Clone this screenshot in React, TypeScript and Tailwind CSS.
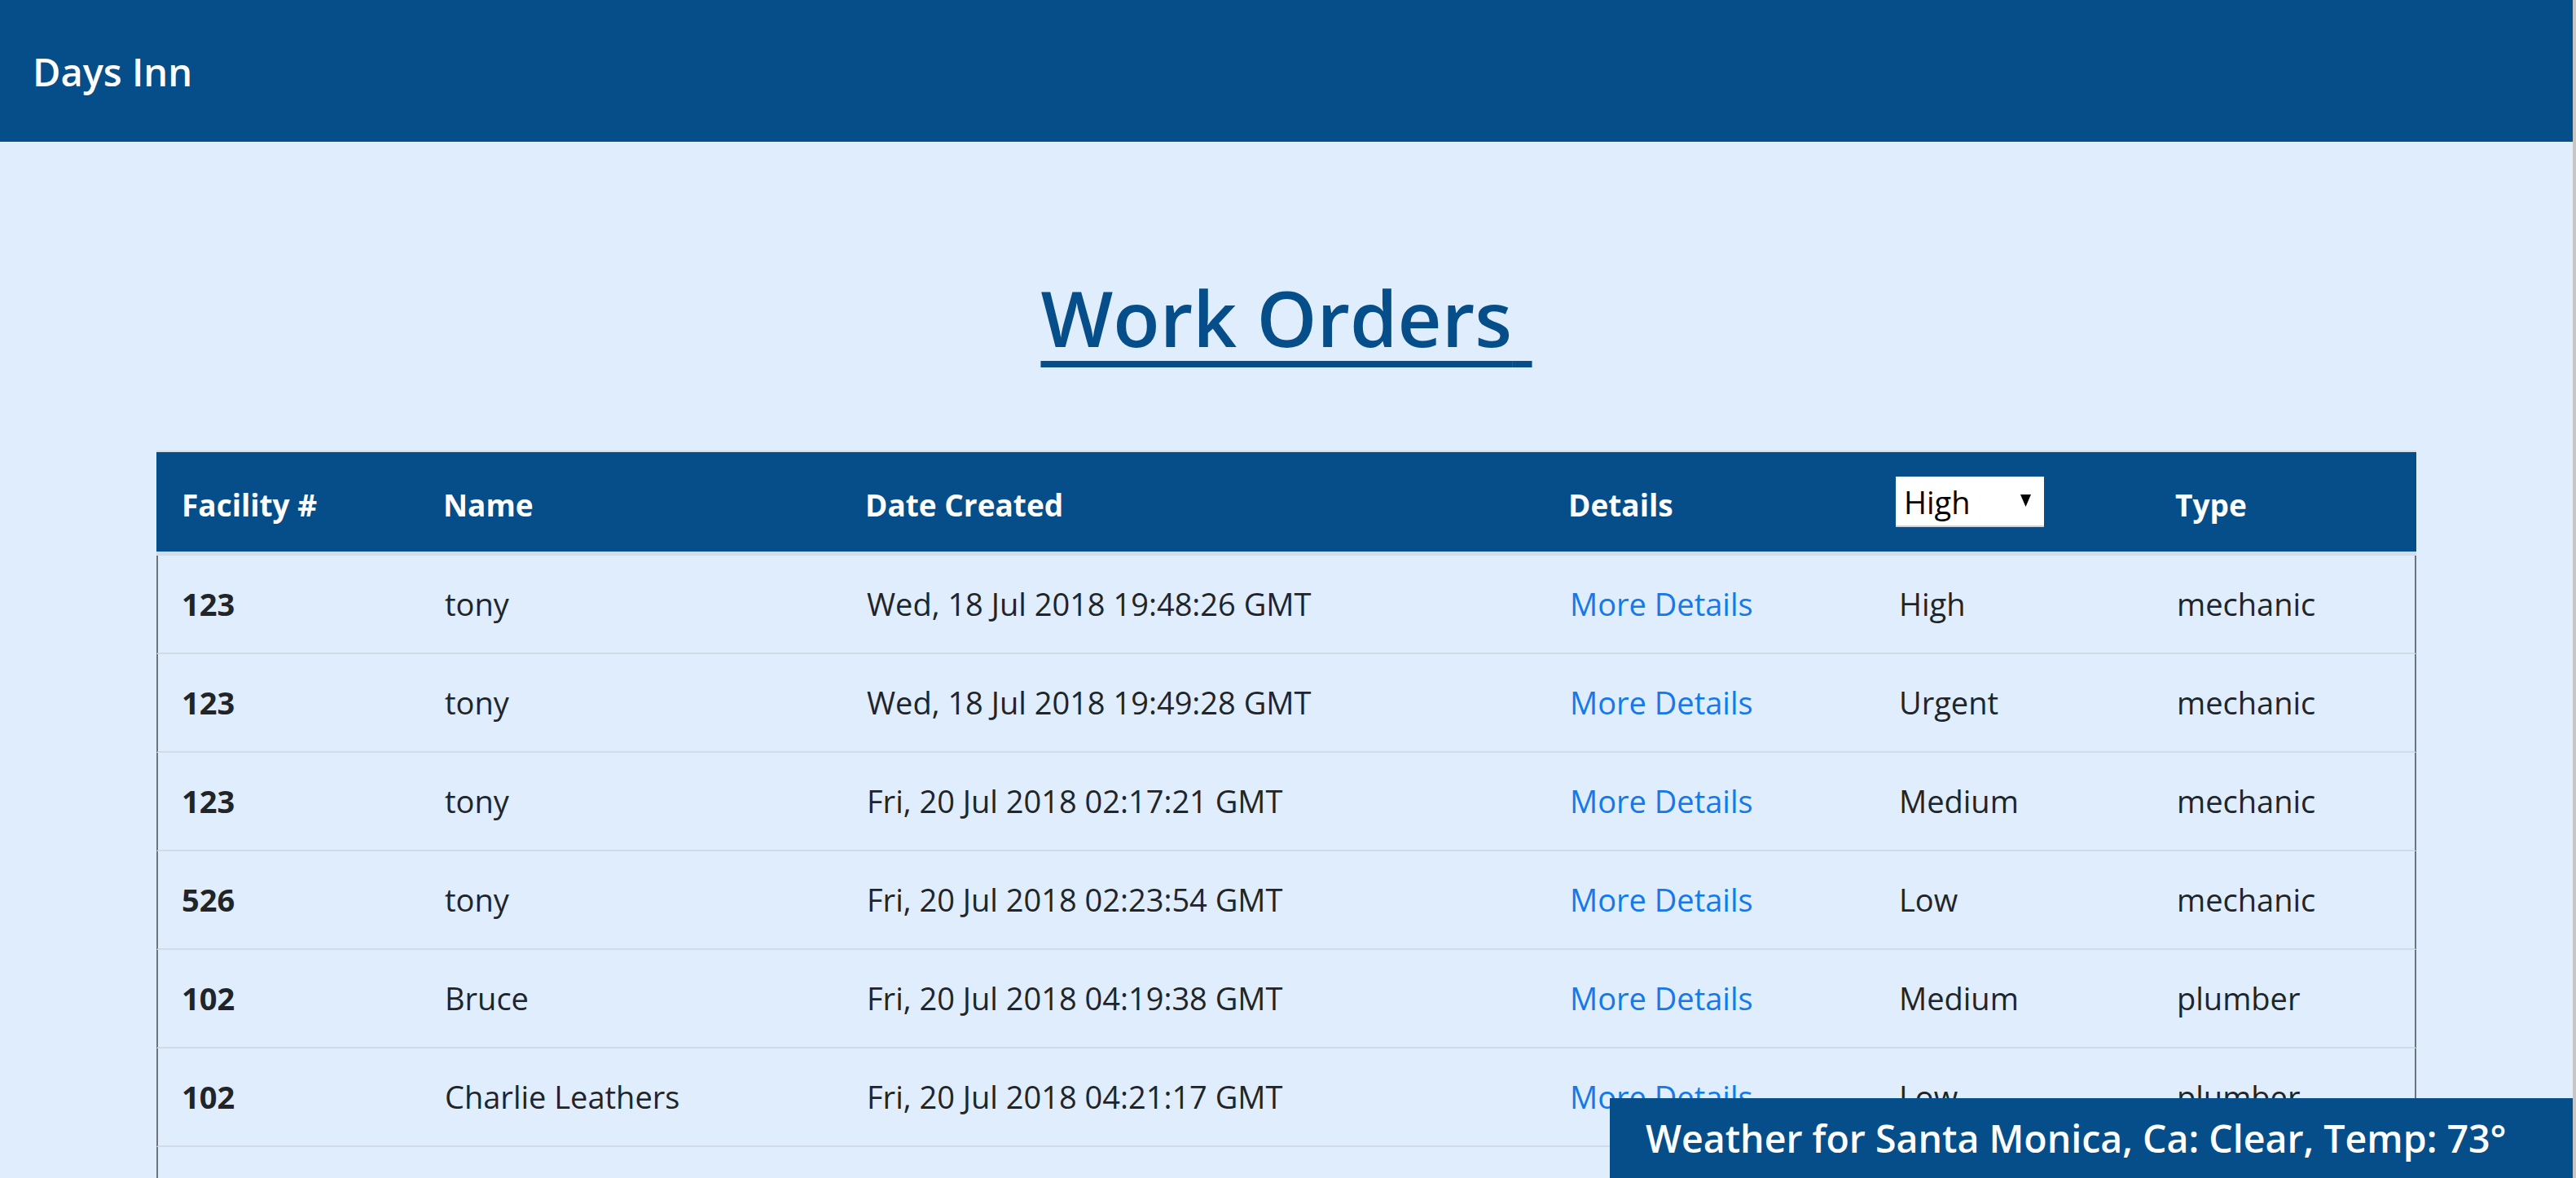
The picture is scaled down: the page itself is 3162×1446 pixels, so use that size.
import { useState } from "react";

type Order = {
  facility: string;
  name: string;
  created: string;
  priority: string;
  type: string;
};

const orders: Order[] = [
  { facility: "123", name: "tony", created: "Wed, 18 Jul 2018 19:48:26 GMT", priority: "High", type: "mechanic" },
  { facility: "123", name: "tony", created: "Wed, 18 Jul 2018 19:49:28 GMT", priority: "Urgent", type: "mechanic" },
  { facility: "123", name: "tony", created: "Fri, 20 Jul 2018 02:17:21 GMT", priority: "Medium", type: "mechanic" },
  { facility: "526", name: "tony", created: "Fri, 20 Jul 2018 02:23:54 GMT", priority: "Low", type: "mechanic" },
  { facility: "102", name: "Bruce", created: "Fri, 20 Jul 2018 04:19:38 GMT", priority: "Medium", type: "plumber" },
  { facility: "102", name: "Charlie Leathers", created: "Fri, 20 Jul 2018 04:21:17 GMT", priority: "Low", type: "plumber" },
];

const cols = "grid grid-cols-[321px_518px_863px_404px_341px_327px]";

export default function App() {
  const [priority, setPriority] = useState("High");

  return (
    <div className="h-screen overflow-hidden flex bg-[#dfedfc] text-[#212529] font-['Open_Sans',sans-serif]">
      <div className="flex-1 relative">
        <nav className="h-[174px] bg-[#054e89] flex items-center pl-[40px] pt-[3px]">
          <div className="text-white text-[47px] leading-none font-semibold">Days Inn</div>
        </nav>

        <h1 className="text-center mt-[160px] mb-[106px] text-[94px] leading-[1.2] font-semibold text-[#054e89] underline decoration-[8px] underline-offset-[17px]">
          Work Orders{"\u00a0"}
        </h1>

        <div className="w-[2774px] mx-auto border-t-2 border-[#d6dfe9]">
          <div className={`${cols} h-[122px] bg-[#054e89] text-white font-bold text-[37px] items-center`}>
            <div className="pl-[31px] pt-[7px]">Facility #</div>
            <div className="pl-[31px] pt-[7px]">Name</div>
            <div className="pl-[31px] pt-[7px]">Date Created</div>
            <div className="pl-[31px] pt-[7px]">Details</div>
            <div className="pl-[29px]">
              <div className="relative w-[182px] h-[62px]">
                <select
                  value={priority}
                  onChange={(e) => setPriority(e.target.value)}
                  className="appearance-none w-full h-full bg-white text-black font-normal text-[38px] leading-[1.2] pl-[10px] pt-[4px] outline-none border-b-2 border-[#c9d3de] rounded-none"
                >
                  <option>High</option>
                  <option>Urgent</option>
                  <option>Medium</option>
                  <option>Low</option>
                </select>
                <svg className="absolute right-[16px] top-[22px] pointer-events-none" width="13" height="15" viewBox="0 0 13 15">
                  <path d="M0 0h13L6.5 15z" fill="#000" />
                </svg>
              </div>
            </div>
            <div className="pl-[31px] pt-[7px]">Type</div>
          </div>
          <div className="h-[5px] bg-[#d3dce7]" />

          {orders.map((o, i) => (
            <div
              key={i}
              className={`${cols} h-[121px] items-center text-[38px] border-b-2 border-b-[#d1dbe6] border-x-2 border-x-[#6c757d]`}
            >
              <div className="pl-[29px] font-bold">{o.facility}</div>
              <div className="pl-[31px]">{o.name}</div>
              <div className="pl-[31px]">{o.created}</div>
              <div className="pl-[31px]">
                <a href="#" className="text-[#1479ea]">More Details</a>
              </div>
              <div className="pl-[31px]">{o.priority}</div>
              <div className="pl-[31px]">{o.type}</div>
            </div>
          ))}
          <div className="h-[121px] border-x-2 border-x-[#6c757d]" />
        </div>

        <div className="absolute bottom-0 right-0 w-[1182px] h-[98px] bg-[#054e89] flex items-center px-[44px]">
          <span className="text-white text-[46.5px] font-semibold leading-none whitespace-nowrap">
            Weather for Santa Monica, Ca: Clear, Temp: 73°
          </span>
        </div>
      </div>
      <div className="w-[4px] bg-[#c6c6c6]" />
    </div>
  );
}
